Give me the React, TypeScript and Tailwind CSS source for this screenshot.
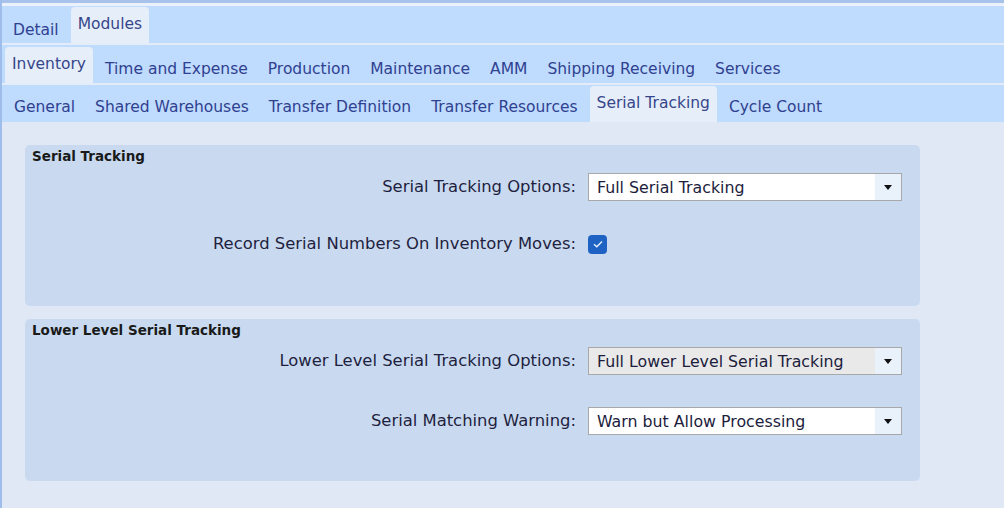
import React from 'react';

const font = { fontFamily: '"DejaVu Sans", Verdana, sans-serif' };

interface TabRowProps {
  tabs: string[];
  active: string;
  className?: string;
  textTop?: string;
}

function TabRow({ tabs, active, className = '', textTop = 'pt-[10px]' }: TabRowProps) {
  return (
    <div className={`flex items-end bg-[#bfdbfe] h-[37px] ${className}`}>
      {tabs.map((tab) =>
        tab === active ? (
          <div
            key={tab}
            className="h-[36px] mx-[2px] px-[7px] pt-[6px] bg-[#e6eefa] rounded-t-[4px] text-[15.5px] text-[#36468a] whitespace-nowrap"
          >
            {tab}
          </div>
        ) : (
          <div key={tab} className={`h-[36px] px-[10px] ${textTop} text-[15.5px] text-[#2f4190] whitespace-nowrap`}>
            {tab}
          </div>
        )
      )}
    </div>
  );
}

function Select({ value, disabled = false }: { value: string; disabled?: boolean }) {
  return (
    <div
      className={`flex h-[28px] w-[314px] border border-[#a8a8a8] ${
        disabled ? 'bg-[#e9e9e9]' : 'bg-white'
      }`}
    >
      <div className="flex-1 flex items-center pl-[8px] pt-[2px] text-[15.8px] text-[#1c1c3c] whitespace-nowrap">
        {value}
      </div>
      <div className="w-[26px] flex items-center justify-center bg-[#e9f1fb]">
        <svg width="8" height="5" viewBox="0 0 8 5">
          <path d="M0 0 H8 L4 5 Z" fill="#111" />
        </svg>
      </div>
    </div>
  );
}

function Checkbox() {
  return (
    <div className="w-[19px] h-[19px] rounded-[4px] bg-[#1e63c4] flex items-center justify-center">
      <svg width="12" height="10" viewBox="0 0 12 10">
        <path d="M2 5.2 L4.8 7.8 L10 2.4" fill="none" stroke="#e8f0ff" strokeWidth="1.4" />
      </svg>
    </div>
  );
}

function Label({ children }: { children: React.ReactNode }) {
  return <div className="text-right text-[16.4px] text-[#1f1f3f] whitespace-nowrap">{children}</div>;
}

export default function App() {
  return (
    <div style={font} className="w-[1004px] h-[508px] overflow-hidden bg-[#dfe8f4] border-l-2 border-[#9fbdea]">
      <div className="h-[3px] bg-[#a7c3eb]" />
      <div className="h-[3px] bg-[#eaf1fb]" />
      <TabRow tabs={['Detail', 'Modules']} active="Modules" className="pl-[1px]" textTop="pt-[12px]" />
      <div className="h-[2px] bg-[#e4ecf8]" />
      <TabRow
        tabs={['Inventory', 'Time and Expense', 'Production', 'Maintenance', 'AMM', 'Shipping Receiving', 'Services']}
        active="Inventory"
        className="h-[38px] pl-[1px]"
        textTop="pt-[11px]"
      />
      <div className="h-[2px] bg-[#e4ecf8]" />
      <TabRow
        tabs={['General', 'Shared Warehouses', 'Transfer Definition', 'Transfer Resources', 'Serial Tracking', 'Cycle Count']}
        active="Serial Tracking"
        className="h-[36px] pl-[2px]"
        textTop="pt-[10px]"
      />

      <div className="pl-[23px] pt-[23px] flex flex-col gap-[13px]">
        {/* Serial Tracking */}
        <div className="w-[895px] h-[161px] bg-[#c9daf0] rounded-[5px] pt-[2px] pl-[7px]">
          <div className="text-[13.5px] font-bold text-[#1a1a1a] leading-[18px]">Serial Tracking</div>
          <div className="grid grid-cols-[544px_314px] gap-x-[12px] items-center mt-[8px]">
            <Label>Serial Tracking Options:</Label>
            <Select value="Full Serial Tracking" />
          </div>
          <div className="grid grid-cols-[544px_314px] gap-x-[12px] items-center mt-[31px]">
            <Label>Record Serial Numbers On Inventory Moves:</Label>
            <Checkbox />
          </div>
        </div>

        {/* Lower Level Serial Tracking */}
        <div className="w-[895px] h-[162px] bg-[#c9daf0] rounded-[5px] pt-[2px] pl-[7px]">
          <div className="text-[13.5px] font-bold text-[#1a1a1a] leading-[18px]">Lower Level Serial Tracking</div>
          <div className="grid grid-cols-[544px_314px] gap-x-[12px] items-center mt-[8px]">
            <Label>Lower Level Serial Tracking Options:</Label>
            <Select value="Full Lower Level Serial Tracking" disabled />
          </div>
          <div className="grid grid-cols-[544px_314px] gap-x-[12px] items-center mt-[32px]">
            <Label>Serial Matching Warning:</Label>
            <Select value="Warn but Allow Processing" />
          </div>
        </div>
      </div>
    </div>
  );
}
